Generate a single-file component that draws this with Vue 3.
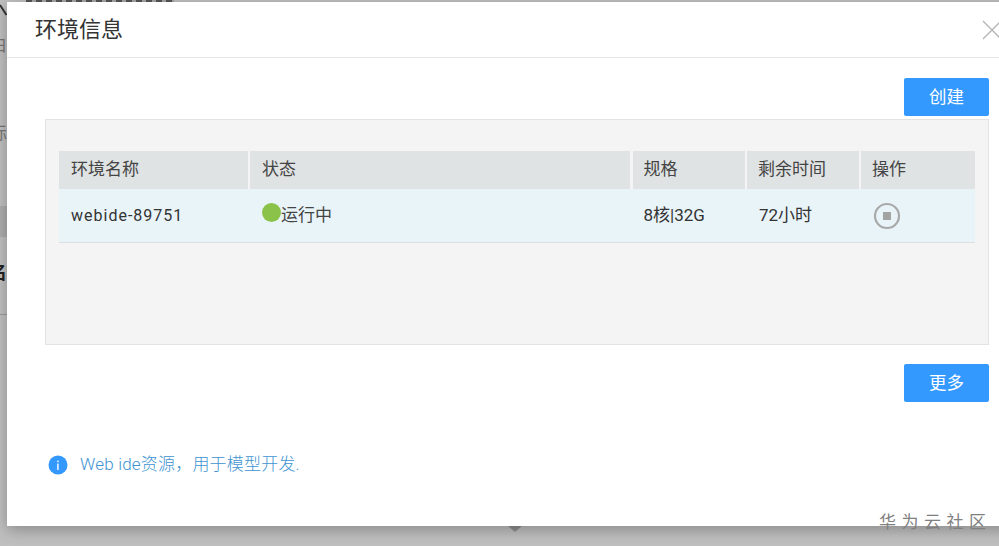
<script setup>
const columns = [
  { label: '环境名称', grow: 'c1' },
  { label: '状态', grow: 'c2' },
  { label: '规格', grow: 'c3' },
  { label: '剩余时间', grow: 'c4' },
  { label: '操作', grow: 'c5' },
]
</script>

<template>
  <div class="page">
    <div class="back">
      <div class="topstrip"></div>
      <svg class="slash" width="7" height="12" viewBox="0 0 7 12"><path d="M0 1 6.500 11" stroke="#333" stroke-width="2" fill="none" /></svg>
      <span class="frag f3">白</span>
      <span class="frag f4">际</span>
      <div class="band"></div>
      <span class="frag f5">名</span>
      <div class="bline"></div>
      <div class="diamond"></div>
    </div>

    <section class="modal">
      <header class="head">
        <h1 class="title">环境信息</h1>
        <svg class="close" width="20" height="20" viewBox="0 0 20 20">
          <path d="M1 1 19 19M19 1 1 19" stroke="#b4b4b4" stroke-width="1.300" fill="none" />
        </svg>
      </header>

      <div class="body">
        <div class="actions"><button class="btn">创建</button></div>

        <div class="panel">
          <div class="table">
            <div class="row thead">
              <div v-for="c in columns" :key="c.label" class="cell" :class="c.grow">{{ c.label }}</div>
            </div>
            <div class="row tbody">
              <div class="cell c1 name">webide-89751</div>
              <div class="cell c2 status"><i class="dot"></i><span class="lift">运行中</span></div>
              <div class="cell c3 spec"><span class="lift">8核|32G</span></div>
              <div class="cell c4 spec"><span class="lift">72小时</span></div>
              <div class="cell c5">
                <svg class="stop" width="28" height="28" viewBox="0 0 28 28">
                  <circle cx="14" cy="14" r="12" fill="none" stroke="#a9a9a9" stroke-width="2.200" />
                  <rect x="10" y="10" width="8" height="8" fill="#a3a3a3" />
                </svg>
              </div>
            </div>
          </div>
        </div>

        <div class="actions more"><button class="btn">更多</button></div>

        <div class="tip">
          <svg class="info" width="20" height="20" viewBox="0 0 20 20">
            <circle cx="10" cy="10" r="9.500" fill="#3399ff" />
            <rect x="9.200" y="8.600" width="1.400" height="6.400" fill="#fff" />
            <rect x="9.200" y="5.600" width="1.400" height="1.600" fill="#fff" />
          </svg>
          <span class="tiptext">Web ide资源，用于模型开发.</span>
        </div>
      </div>
    </section>

    <div class="mark">华为云社区</div>
  </div>
</template>

<style>
html, body { margin: 0; overflow: hidden; }
</style>

<style scoped>
.page {
  position: relative;
  width: 999px;
  height: 546px;
  overflow: hidden;
  background: #bfbfbf;
  font-family: Roboto, "Noto Sans CJK SC", sans-serif;
  color: #333;
}
.back { position: absolute; inset: 0; }
.topstrip {
  position: absolute; left: 26px; top: 0; width: 148px; height: 2px;
  background: repeating-linear-gradient(90deg, #555 0 6px, #a5a5a5 6px 10px);
}
.slash { position: absolute; left: 0; top: 4px; }
.frag { position: absolute; line-height: 1; }
.f3 { left: -10px; top: 37px; font-size: 17px; color: #777; }
.f4 { left: -10px; top: 125px; font-size: 17px; color: #777; }
.f5 { left: -11px; top: 264px; font-size: 18px; font-weight: 700; color: #222; }
.band { position: absolute; left: 0; top: 206px; width: 7px; height: 31px; background: #adadad; }
.bline { position: absolute; left: 0; top: 314px; width: 7px; height: 1px; background: #999; }
.diamond {
  position: absolute; left: 504px; top: 516px; width: 22px; height: 16px;
  background: #8f8f8f; clip-path: polygon(50% 100%, 0 40%, 100% 40%);
}
.modal {
  position: absolute;
  left: 7px;
  top: 2px;
  width: 1010px;
  height: 524px;
  background: #fff;
  box-shadow: 0 4px 14px rgba(0, 0, 0, .28);
}
.head {
  position: relative;
  height: 55px;
  border-bottom: 1px solid #e6e6e6;
  display: flex;
  align-items: center;
  padding-left: 28px;
}
.title { margin: 0; font-size: 22px; font-weight: 400; color: #333; line-height: 1; }
.close { position: absolute; left: 975px; top: 18px; }
.body { width: 944px; padding: 20px 0 0 38px; }
.actions { display: flex; justify-content: flex-end; height: 42px; }
.btn {
  width: 85px;
  height: 38px;
  border: 0;
  border-radius: 2px;
  background: #3399ff;
  color: #fff;
  font: inherit;
  font-size: 17.500px;
  padding: 0 0 4px;
}
.panel {
  box-sizing: border-box;
  height: 226px;
  margin-top: -1px;
  background: #f4f4f4;
  border: 1px solid #e3e3e3;
  padding: 31px 13px 0 13px;
}
.table { width: 916px; }
.row { display: flex; gap: 2.500px; }
.thead { height: 38px; font-size: 17px; }
.thead .cell { background: #e0e3e3; padding: 0 0 6px 12px; }
.thead .c3, .thead .c4, .thead .c5 { padding-left: 11px; }
.tbody { height: 54px; background: #e9f4f9; border-bottom: 1px solid #dcdfe0; box-sizing: border-box; font-size: 17px; }
.tbody .cell { padding-left: 12px; }
.tbody .c3 { padding-left: 11px; }
.tbody .c5 { padding-left: 11.500px; }
.cell { box-sizing: border-box; display: flex; align-items: center; color: #444; }
.c1 { width: 188.500px; }
.c2 { width: 380px; }
.c3 { width: 112px; }
.c4 { width: 111.500px; }
.c5 { width: 114px; }
.name { font-size: 16px; letter-spacing: 1px; color: #333; }
.spec { color: #333; }
.lift { margin-bottom: 4px; }
.dot {
  width: 19px; height: 19px; border-radius: 50%; background: #8bc34a;
  transform: translateY(-3px);
}
.stop { flex: none; }
.more { margin-top: 19px; }
.tip {
  display: flex;
  align-items: center;
  gap: 12px;
  margin: 44px 0 0 3px;
  color: #3e94d1;
  font-size: 17px;
  font-weight: 300;
}
.tiptext { letter-spacing: .2px; margin-bottom: 4px; }
.info { flex: none; }
.mark {
  position: absolute;
  left: 879px;
  top: 511px;
  color: #808080;
  font-size: 17px;
  letter-spacing: 5.500px;
  white-space: nowrap;
  line-height: 22px;
}
</style>
